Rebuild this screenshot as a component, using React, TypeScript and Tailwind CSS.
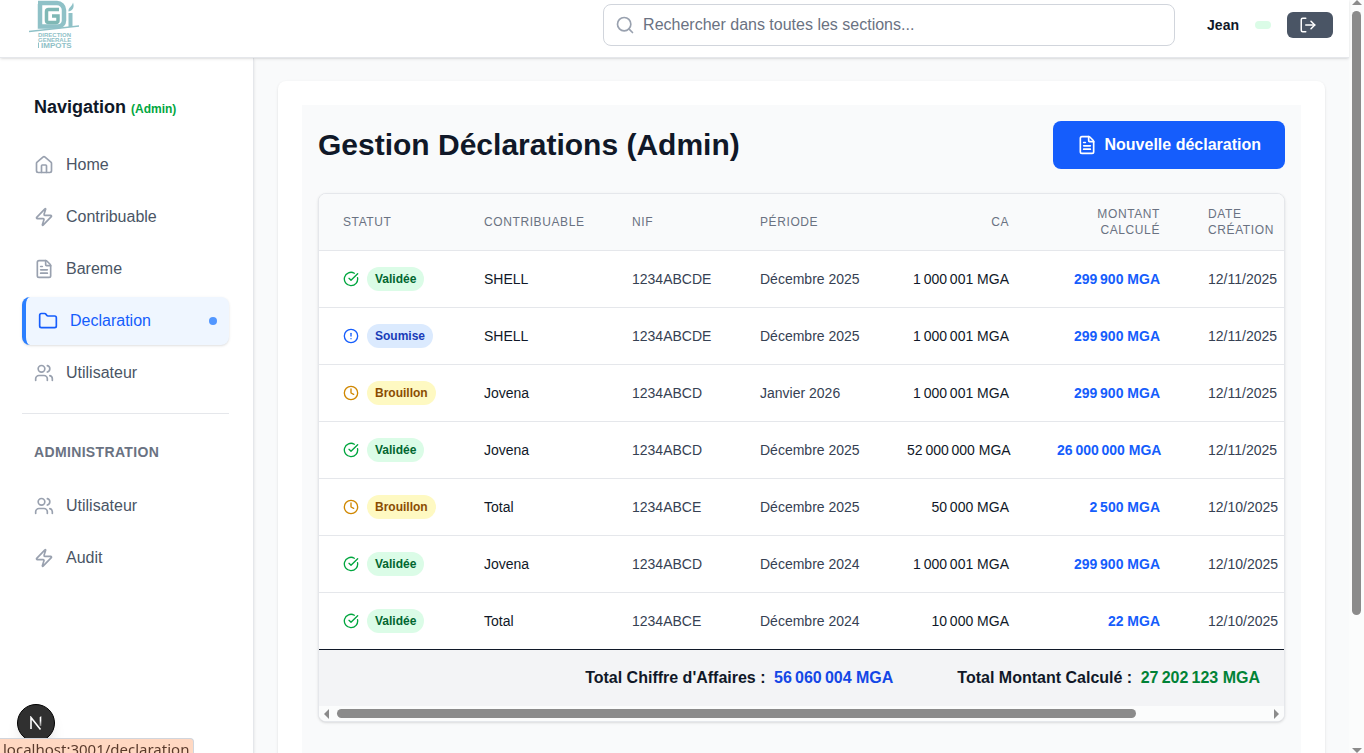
import React, { useState } from 'react';
import {
  CircleAlert,
  CircleCheckBig,
  Clock,
  FileText,
  Folder,
  House,
  Search,
  Users,
  Zap,
} from 'lucide-react';
import { FiLogOut } from 'react-icons/fi';

type Statut = 'Validée' | 'Soumise' | 'Brouillon';

interface Declaration {
  id: number;
  statut: Statut;
  contribuable: string;
  nif: string;
  periode: string;
  ca: number;
  montant: number;
  date: string;
}

const declarations: Declaration[] = [
  { id: 1, statut: 'Validée', contribuable: 'SHELL', nif: '1234ABCDE', periode: 'Décembre 2025', ca: 1000001, montant: 299900.2, date: '12/11/2025' },
  { id: 2, statut: 'Soumise', contribuable: 'SHELL', nif: '1234ABCDE', periode: 'Décembre 2025', ca: 1000001, montant: 299900.2, date: '12/11/2025' },
  { id: 3, statut: 'Brouillon', contribuable: 'Jovena', nif: '1234ABCD', periode: 'Janvier 2026', ca: 1000001, montant: 299900.2, date: '12/11/2025' },
  { id: 4, statut: 'Validée', contribuable: 'Jovena', nif: '1234ABCD', periode: 'Décembre 2025', ca: 52000000, montant: 26000000, date: '12/11/2025' },
  { id: 5, statut: 'Brouillon', contribuable: 'Total', nif: '1234ABCE', periode: 'Décembre 2025', ca: 50000, montant: 2500, date: '12/10/2025' },
  { id: 6, statut: 'Validée', contribuable: 'Jovena', nif: '1234ABCD', periode: 'Décembre 2024', ca: 1000001, montant: 299900.2, date: '12/10/2025' },
  { id: 7, statut: 'Validée', contribuable: 'Total', nif: '1234ABCE', periode: 'Décembre 2024', ca: 10000, montant: 22, date: '12/10/2025' },
];

const statuts = {
  'Validée': { icon: CircleCheckBig, iconClass: 'text-green-600', badge: 'bg-green-100 text-green-800' },
  'Soumise': { icon: CircleAlert, iconClass: 'text-blue-600', badge: 'bg-blue-100 text-blue-800' },
  'Brouillon': { icon: Clock, iconClass: 'text-yellow-600', badge: 'bg-yellow-100 text-yellow-800' },
};

const mainLinks = [
  { name: 'Home', href: '#home', icon: House },
  { name: 'Contribuable', href: '#contribuable', icon: Zap },
  { name: 'Bareme', href: '#bareme', icon: FileText },
  { name: 'Declaration', href: '#declaration', icon: Folder },
  { name: 'Utilisateur', href: '#utilisateur', icon: Users },
];

const adminLinks = [
  { name: 'Utilisateur', href: '#admin-utilisateur', icon: Users },
  { name: 'Audit', href: '#audit', icon: Zap },
];

// 1000001 -> "1 000 001 MGA", thin spaces between the groups
const formatMGA = (value: number) =>
  `${String(Math.round(value)).replace(/\B(?=(\d{3})+$)/g, '\u2009')} MGA`;

const Logo: React.FC = () => (
  <svg width="52" height="50" viewBox="0 0 52 50" role="img" aria-label="Direction Générale des Impôts">
    <g fill="none" stroke="#8fc1c7">
      <path d="M9 3h19a7 7 0 0 1 7 7v10.500a6 6 0 0 1-6 6H11V4" strokeWidth="4.500" />
      <path d="M30 9.500H19.500a2 2 0 0 0-2 2v9a2 2 0 0 0 2 2H27a2 2 0 0 0 2-2v-4.500h-6" stroke="#7fb8b5" strokeWidth="3.500" />
      <path d="M41.500 13v14" strokeWidth="4" />
      <path d="M0 31.500 50 26" strokeWidth="1.500" />
    </g>
    <path d="M39.500 11.500c-.5-4 3.500-4.500 4.500-9 1.500 4 .5 8-4.500 9z" fill="#8fc1c7" />
    <g fill="#8fc1c7" className="font-['Liberation_Sans',sans-serif] text-[6px] font-bold">
      <text x="9" y="36.500">DIRECTION</text>
      <text x="9" y="41.500">GENERALE</text>
      <text x="12" y="48" className="text-[8px]">IMPOTS</text>
    </g>
    <path d="M9.500 42.500v5.500" stroke="#8fc1c7" />
  </svg>
);

interface NavItemProps {
  name: string;
  href: string;
  icon: React.ElementType;
  active?: boolean;
  onClick: () => void;
}

const NavItem: React.FC<NavItemProps> = ({ name, href, icon: Icon, active, onClick }) => (
  <li>
    <a
      href={href}
      onClick={(e) => {
        e.preventDefault();
        onClick();
      }}
      className={`flex items-center gap-3 rounded-lg px-3 py-3 ${
        active
          ? 'border-l-4 border-blue-500 bg-blue-50 text-blue-600 shadow-sm'
          : 'text-gray-600 hover:bg-gray-50'
      }`}
    >
      <Icon className={`size-5 shrink-0 ${active ? 'text-blue-600' : 'text-gray-400'}`} />
      <span className="flex-1">{name}</span>
      {active && <span className="size-2 rounded-full bg-blue-500 opacity-80" />}
    </a>
  </li>
);

const Header: React.FC = () => (
  <header className="relative z-10 flex h-[58px] shrink-0 items-center border-b border-gray-200 bg-white pr-4 pb-[7px] pl-[29px] shadow-sm">
    <Logo />
    <div className="relative ml-auto w-[572px]">
      <Search className="absolute top-1/2 left-3 size-5 -translate-y-1/2 text-gray-400" />
      <input
        type="text"
        aria-label="Rechercher"
        placeholder="Rechercher dans toutes les sections..."
        className="block w-full rounded-lg border border-gray-300 py-2 pr-4 pl-[39px] text-base text-gray-900 placeholder:text-gray-500 focus:outline-none"
      />
    </div>
    <div className="ml-8 flex items-center gap-4">
      <span className="text-sm font-semibold text-gray-900">Jean</span>
      <span className="h-2 w-4 rounded-full bg-green-100" />
      <button type="button" aria-label="Déconnexion" className="flex rounded-md bg-gray-600 px-3 py-1 text-white">
        <FiLogOut className="mr-1 h-[18px] w-[18px]" />
      </button>
    </div>
  </header>
);

const Sidebar: React.FC = () => {
  const [current, setCurrent] = useState('#declaration');

  return (
    <aside className="w-[254px] shrink-0 border-r border-gray-200 bg-white pt-[35px] pr-6 pl-[22px] shadow-sm">
      <h2 className="px-3 text-lg font-bold text-gray-900">
        Navigation <span className="text-xs font-semibold text-green-600">(Admin)</span>
      </h2>
      <nav className="mt-5">
        <ul className="space-y-1">
          {mainLinks.map((link) => (
            <NavItem key={link.href} {...link} active={current === link.href} onClick={() => setCurrent(link.href)} />
          ))}
        </ul>
        <div className="mt-4 border-t border-gray-200 pt-7">
          <h3 className="px-3 text-sm font-semibold tracking-wide text-gray-500 uppercase">Administration</h3>
          <ul className="mt-5 space-y-1">
            {adminLinks.map((link) => (
              <NavItem key={link.href} {...link} active={current === link.href} onClick={() => setCurrent(link.href)} />
            ))}
          </ul>
        </div>
      </nav>
    </aside>
  );
};

const DeclarationTable: React.FC = () => {
  const totalCa = declarations.reduce((sum, d) => sum + d.ca, 0);
  const totalMontant = declarations.reduce((sum, d) => sum + d.montant, 0);

  return (
    <div className="mt-6 overflow-hidden rounded-lg border border-gray-200 bg-white shadow-sm">
      <div className="overflow-hidden">
        <table className="w-[983px] table-fixed text-sm">
          <colgroup>
            <col className="w-[141px]" />
            <col className="w-[148px]" />
            <col className="w-32" />
            <col className="w-[147px]" />
            <col className="w-[150px]" />
            <col className="w-[151px]" />
            <col className="w-[118px]" />
          </colgroup>
          <thead className="bg-gray-50">
            <tr className="border-b border-gray-200 text-left text-xs tracking-wider text-gray-500 uppercase">
              <th className="px-6 py-3 font-medium">Statut</th>
              <th className="px-6 py-3 font-medium">Contribuable</th>
              <th className="px-6 py-3 font-medium">NIF</th>
              <th className="px-6 py-3 font-medium">Période</th>
              <th className="px-6 py-3 text-right font-medium">CA</th>
              <th className="px-6 py-3 text-right font-medium">Montant Calculé</th>
              <th className="px-6 py-3 font-medium">Date Création</th>
            </tr>
          </thead>
          <tbody className="divide-y divide-gray-200 whitespace-nowrap">
            {declarations.map((d) => {
              const { icon: Icon, iconClass, badge } = statuts[d.statut];
              return (
                <tr key={d.id}>
                  <td className="px-6 py-4">
                    <div className="flex items-center gap-2">
                      <Icon className={`size-4 shrink-0 ${iconClass}`} />
                      <span className={`rounded-full px-2 py-1 text-xs font-semibold ${badge}`}>{d.statut}</span>
                    </div>
                  </td>
                  <td className="px-6 py-4 font-medium text-gray-900">{d.contribuable}</td>
                  <td className="px-6 py-4 text-gray-700">{d.nif}</td>
                  <td className="px-6 py-4 text-gray-700">{d.periode}</td>
                  <td className="px-6 py-4 text-right text-gray-900">{formatMGA(d.ca)}</td>
                  <td className="px-6 py-4 text-right font-bold text-blue-600">{formatMGA(d.montant)}</td>
                  <td className="px-6 py-4 text-gray-700">{d.date}</td>
                </tr>
              );
            })}
          </tbody>
        </table>
      </div>

      {/* Totals */}
      <div className="flex justify-end gap-16 border-t border-gray-900 bg-gray-100 px-6 py-4 font-bold text-gray-900">
        <p>
          Total Chiffre d'Affaires : <span className="ml-1 text-blue-700">{formatMGA(totalCa)}</span>
        </p>
        <p>
          Total Montant Calculé : <span className="ml-1 text-green-700">{formatMGA(totalMontant)}</span>
        </p>
      </div>

      {/* Horizontal scrollbar */}
      <div className="flex h-[15px] items-center justify-between bg-[#fbfcfc] px-[5px]">
        <span className="border-y-5 border-r-5 border-y-transparent border-r-[#8b8b8b]" />
        <span className="mx-2 flex-1">
          <span className="block h-[9px] w-[86%] rounded-full bg-[#8b8b8b]" />
        </span>
        <span className="border-y-5 border-l-5 border-y-transparent border-l-[#8b8b8b]" />
      </div>
    </div>
  );
};

export default function App() {
  return (
    <div className="flex h-screen overflow-hidden bg-gray-50 font-['Liberation_Sans',Arial,sans-serif] text-gray-900">
      <div className="flex min-w-0 flex-1 flex-col">
        <Header />
        <div className="flex min-h-0 flex-1">
          <Sidebar />
          <main className="min-w-0 flex-1 px-6 pt-[23px]">
            <div className="rounded-lg bg-white p-6 shadow-sm">
              <div className="bg-gray-50 p-4 pb-16">
                <div className="flex items-center justify-between">
                  <h1 className="text-3xl font-bold">Gestion Déclarations (Admin)</h1>
                  <button
                    type="button"
                    className="flex items-center gap-2 rounded-lg bg-blue-600 px-6 py-3 font-semibold text-white hover:bg-blue-700"
                  >
                    <FileText className="size-5" />
                    Nouvelle déclaration
                  </button>
                </div>
                <DeclarationTable />
              </div>
            </div>
          </main>
        </div>
      </div>

      {/* Page scrollbar */}
      <div className="flex w-[15px] shrink-0 flex-col items-center bg-[#fbfcfc]">
        <span className="border-x-5 border-b-5 border-x-transparent border-b-[#8b8b8b]" />
        <span className="mt-1.5 flex-1">
          <span className="block h-[82%] w-[9px] rounded-full bg-[#8b8b8b]" />
        </span>
        <span className="border-x-5 border-t-5 border-x-transparent border-t-[#8b8b8b]" />
      </div>

      {/* Dev tools badge and link preview */}
      <button
        type="button"
        aria-label="Next.js"
        className="fixed bottom-[11px] left-[17px] z-20 flex size-[38px] items-center justify-center rounded-full border border-black bg-[#303030] text-white shadow-lg"
      >
        <svg width="14" height="14" viewBox="0 0 14 14" fill="none" strokeWidth="1.600">
          <defs>
            <linearGradient id="stem" x1="0" y1="1" x2="0" y2="13" gradientUnits="userSpaceOnUse">
              <stop offset="0.3" stopColor="#fff" />
              <stop offset="1" stopColor="#fff" stopOpacity="0" />
            </linearGradient>
          </defs>
          <path d="M2 13V1.500l9.500 12" stroke="#fff" />
          <path d="M11.500 1h.01V10" stroke="url(#stem)" />
        </svg>
      </button>
      <div className="fixed bottom-0 left-0 z-30 h-[15px] rounded-tr border-t border-r border-gray-300 bg-[#ffd8c2] pr-1 pl-[3px] font-['Noto_Sans',sans-serif] text-[15px] leading-5 text-[#5a3a2c]">
        localhost:3001/declaration
      </div>
    </div>
  );
}
